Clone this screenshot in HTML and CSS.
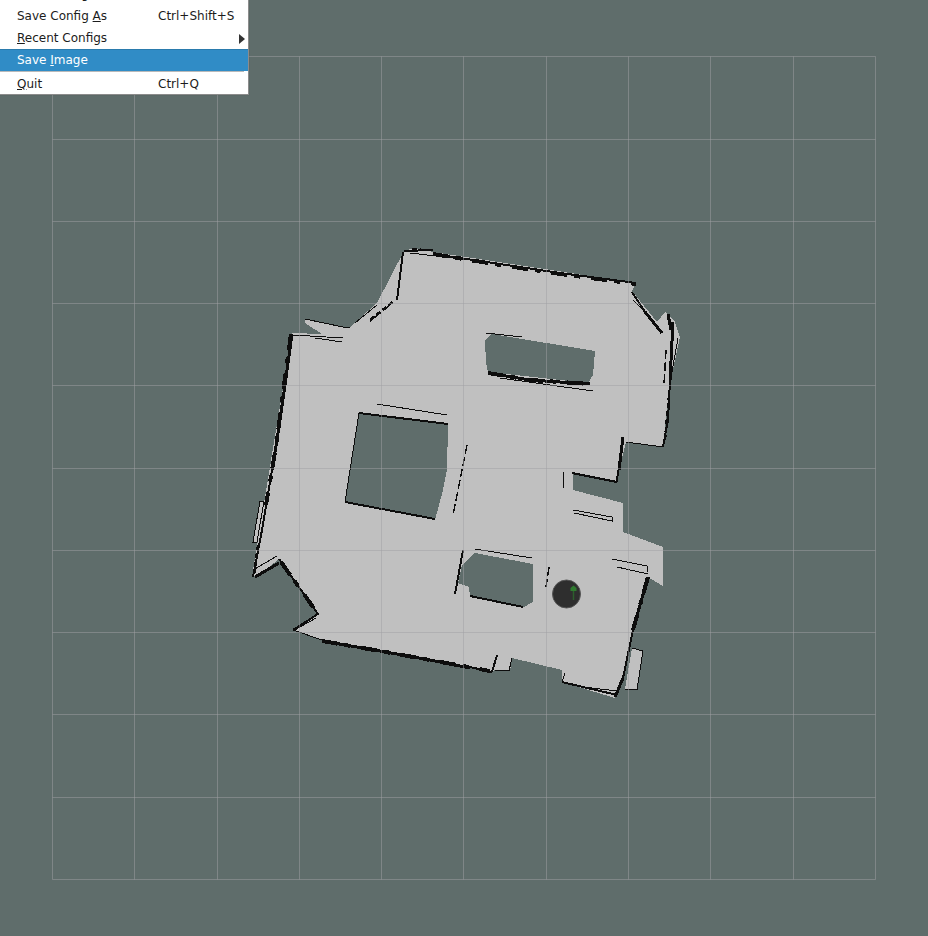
FILE: index.html
```html
<!DOCTYPE html>
<html lang="en">
<head>
    <meta charset="UTF-8">
    <title>Map Viewer</title>
    <link rel="stylesheet" href="styles.css">
</head>
<body>
    <div class="viewport">
        <svg class="scene" width="928" height="936" viewBox="0 0 928 936">
            <!-- Free space of the map, holes cut with evenodd -->
            <g class="map">
                <path class="free" fill-rule="evenodd" d="
                    M404 251 L415 248 L433 252 L636 283 L632 291 L657 322 L665 312 L675 322 L680 337 L670 383 L663 447 L626 442 L619 470 L617 482 L573 474
                    L573 490 L623 503 L623 532 L663 547 L663 586 L648 577 L633 630 L623 678 L615 698 L562 682 L562 670 L512 658 L510 671 L495 670 L492 672
                    L470 667 L322 640 L292 630 L318 614 L279 559 L255 578 L253 570 L292 333 L322 334 L305 323 L305 319 L343 327 L350 327 L377 303 Z
                    M485 340 L492 334 L595 351 L593 375 L588 383 L488 372 L486 363 Z
                    M359 413 L448 425 L447 470 L443 490 L435 520 L345 502 Z
                    M475 553 L533 564 L533 602 L524 607 L470 596 L469 587 L458 583 L462 565 Z"/>
                <polygon class="free" points="632,648 643,651 637,690 625,689"/>
                <polygon class="free" points="260,501 264,501 257,542 253,542"/>
                <polygon class="free" points="563,472 573,473 573,490 563,488"/>

                <!-- heavy walls -->
                <g class="wall wall-heavy">
                    <polyline points="292,334 285,385 277,440 272,470"/>
                    <polyline points="255,577 279,563"/>
                    <polyline points="322,641 380,651 430,660 470,668"/>
                    <polyline points="623,437 619,470"/>
                    <polyline points="648,577 640,605 633,630"/>
                    <polyline points="623,678 615,697"/>
                    <polyline points="668,314 671,330"/>
                    <polyline points="673,322 670,380"/>
                    <polyline points="488,373 530,380 590,384"/>
                    <polyline points="645,312 662,333"/>
                </g>

                <!-- normal walls -->
                <g class="wall wall-mid">
                    <polyline points="272,470 262,530 253,577"/>
                    <polyline points="279,559 318,614 293,630"/>
                    <polyline points="470,667 492,672"/>
                    <polyline points="492,672 497,655"/>
                    <polyline points="562,682 617,695"/>
                    <polyline points="633,630 623,678"/>
                    <polyline points="403,252 397,300"/>
                    <polyline points="404,251 433,250"/>
                    <polyline points="433,254 500,264 560,273 636,283"/>
                    <polyline points="632,292 645,312"/>
                    <polyline points="670,380 668,420 663,447"/>
                    <polyline points="572,473 617,482"/>
                    <polyline points="618,470 617,482"/>
                    <polyline points="463,550 455,594"/>
                    <polyline points="359,413 448,424"/>
                    <polyline points="345,502 435,519"/>
                    <polyline points="470,596 523,607"/>
                </g>

                <!-- thin walls -->
                <g class="wall wall-thin">
                    <polyline points="293,335 343,338"/>
                    <polyline points="315,338 342,342"/>
                    <polyline points="305,319 343,327 350,327"/>
                    <polyline points="377,305 355,323"/>
                    <polyline points="377,404 447,415"/>
                    <polyline points="359,413 350,470 345,502"/>
                    <polyline points="486,333 522,337"/>
                    <polyline points="500,378 593,391"/>
                    <polyline points="678,338 670,383"/>
                    <polyline points="663,447 626,442"/>
                    <polyline points="563,472 563,488"/>
                    <polyline points="573,510 612,517 612,522"/>
                    <polyline points="574,513 612,521"/>
                    <polyline points="612,559 647,566 647,572"/>
                    <polyline points="617,567 648,574"/>
                    <polyline points="475,549 532,558"/>
                    <polyline points="509,671 512,658"/>
                    <polyline points="495,670 509,671"/>
                    <polyline points="565,673 562,682"/>
                    <polyline points="583,687 617,691"/>
                    <polyline points="633,300 643,310"/>
                    <polyline points="632,648 643,651 637,690 625,689"/>
                    <polyline points="260,501 264,501 257,542 253,542 260,501"/>
                    <polyline points="293,630 322,640"/>
                    <polyline points="410,253 470,260"/>
                    <polyline points="253,570 277,556"/>
                    <polyline points="293,631 316,618"/>
                </g>

                <!-- broken scan lines -->
                <g class="wall wall-dash">
                    <polyline points="467,445 453,515"/>
                    <polyline points="390,305 370,321"/>
                    <polyline points="549,567 546,587"/>
                    <polyline points="666,350 664,385"/>
                </g>

                <!-- lumps on top of the walls -->
                <g class="wall wall-lump">
                    <polyline points="291,334 284,385 277,440 272,470 266,505"/>
                    <polyline points="433,254 500,265 560,274 636,284"/>
                    <polyline points="322,641 380,651 430,660 490,671"/>
                    <polyline points="281,562 318,614"/>
                    <polyline points="488,373 530,380 590,384"/>
                    <polyline points="648,577 633,630"/>
                </g>
                <g class="wall wall-speck">
                    <polyline points="258,545 254,575"/>
                    <polyline points="370,320 395,300"/>
                    <polyline points="412,249 424,250"/>
                    <polyline points="669,395 665,440"/>
                </g>
            </g>

            <g class="grid">
                <path d="M52.5 56.5V879.5M134.5 56.5V879.5M217.5 56.5V879.5M299.5 56.5V879.5M381.5 56.5V879.5M463.5 56.5V879.5M546.5 56.5V879.5M628.5 56.5V879.5M710.5 56.5V879.5M793.5 56.5V879.5M875.5 56.5V879.5"/>
                <path d="M52.5 56.5H875.5M52.5 139.5H875.5M52.5 221.5H875.5M52.5 303.5H875.5M52.5 385.5H875.5M52.5 468.5H875.5M52.5 550.5H875.5M52.5 632.5H875.5M52.5 714.5H875.5M52.5 797.5H875.5M52.5 879.5H875.5"/>
            </g>

            <!-- Robot -->
            <circle class="robot" cx="566.5" cy="594" r="14"/>
            <path class="robot-arrow" d="M573.5 600V590"/>
            <path class="robot-head" d="M573.5 585.5 L576.5 588 L576.5 591 L570.5 591 L570.5 588 Z"/>
        </svg>

        <div class="menu">
            <div class="menu-item"><span class="label"><u>S</u>ave Config</span></div>
            <div class="menu-item"><span class="label">Save Config <u>A</u>s</span><span class="shortcut">Ctrl+Shift+S</span></div>
            <div class="menu-item"><span class="label"><u>R</u>ecent Configs</span><span class="submenu-arrow"></span></div>
            <div class="menu-item active"><span class="label">Save <u>I</u>mage</span></div>
            <div class="menu-separator"></div>
            <div class="menu-item last"><span class="label"><u>Q</u>uit</span><span class="shortcut">Ctrl+Q</span></div>
        </div>
    </div>
</body>
</html>
```

FILE: styles.css
```css
* {
    margin: 0;
    padding: 0;
    box-sizing: border-box;
}

body {
    background-color: #5f6d6b;
    font-family: "DejaVu Sans", sans-serif;
}

.viewport {
    position: relative;
    width: 928px;
    height: 936px;
    overflow: hidden;
}

.scene {
    display: block;
}

.map {
    shape-rendering: crispEdges;
}

.free {
    fill: #c0c0c0;
}

.wall {
    fill: none;
    stroke: #0d0d0d;
    stroke-linejoin: miter;
}

.wall-heavy {
    stroke-width: 3;
}

.wall-mid {
    stroke-width: 2;
}

.wall-thin {
    stroke-width: 1;
}

.wall-dash {
    stroke-width: 1.5;
    stroke-dasharray: 9 3;
}

.wall-lump {
    stroke-width: 4;
    stroke-dasharray: 16 7 6 11;
}

.wall-speck {
    stroke-width: 2.5;
    stroke-dasharray: 5 3;
}

.grid path {
    fill: none;
    stroke: rgba(160, 160, 164, 0.5);
    stroke-width: 1;
}

.robot {
    fill: #2e2e2e;
    stroke: #555555;
    stroke-width: 1;
}

.robot-arrow {
    fill: none;
    stroke: #2c5f2c;
    stroke-width: 1.5;
}

.robot-head {
    fill: #2f7a2f;
}

/* Context menu, cut off by the top of the window */
.menu {
    position: absolute;
    top: -18px;
    left: -1px;
    width: 250px;
    background-color: #ffffff;
    border: 1px solid #8c8c8c;
    box-shadow: 0 0 1px rgba(0, 0, 0, 0.2);
    font-size: 12px;
    color: #1c1c1c;
}

.menu-item {
    position: relative;
    height: 22px;
    line-height: 22px;
    padding-left: 17px;
    white-space: nowrap;
}

.menu-item.active {
    background-color: #308cc6;
    border-top: 1px solid #2a7bad;
    line-height: 20px;
    color: #ffffff;
}

.menu-item.last {
    height: 21px;
}

.menu-item .shortcut {
    position: absolute;
    left: 158px;
}

.submenu-arrow {
    position: absolute;
    left: 239px;
    top: 7px;
    border-left: 6px solid #333333;
    border-top: 5px solid transparent;
    border-bottom: 5px solid transparent;
}

.menu-separator {
    height: 2px;
    margin-right: 4px;
    border-top: 1px solid #b9b9b9;
}
```
